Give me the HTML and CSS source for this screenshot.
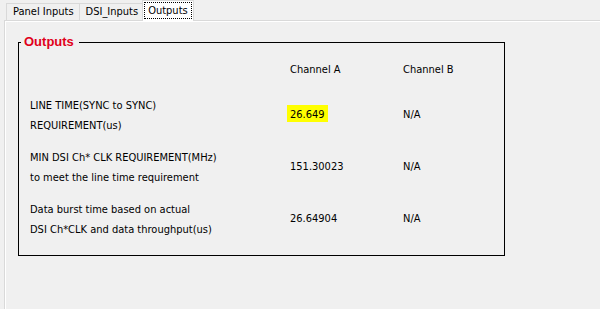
FILE: index.html
```html
<!DOCTYPE html>
<html lang="en">
<head>
  <meta charset="UTF-8" />
  <title>Outputs</title>
  <link rel="stylesheet" href="styles.css">
</head>
<body>

<div class="tabs">
  <div class="tab">Panel Inputs</div>
  <div class="tab">DSI_Inputs</div>
  <div class="tab active"><span class="focus">Outputs</span></div>
</div>

<div class="page">
  <fieldset class="group">
    <legend>Outputs</legend>
    <div class="grid">
      <div></div>
      <div class="head">Channel A</div>
      <div class="head">Channel B</div>

      <div class="label">LINE TIME(SYNC to SYNC)<br>REQUIREMENT(us)</div>
      <div class="value"><span class="hl">26.649</span></div>
      <div class="value">N/A</div>

      <div class="label">MIN DSI Ch* CLK REQUIREMENT(MHz)<br>to meet the line time requirement</div>
      <div class="value">151.30023</div>
      <div class="value">N/A</div>

      <div class="label">Data burst time based on actual<br>DSI Ch*CLK and data throughput(us)</div>
      <div class="value">26.64904</div>
      <div class="value">N/A</div>
    </div>
  </fieldset>
</div>

</body>
</html>
```

FILE: styles.css
```css
* { box-sizing: border-box; }
body {
  margin: 0;
  background: #f0f0f0;
  color: #000;
  font-family: 'DejaVu Sans Condensed', 'Liberation Sans', sans-serif;
  font-size: 11px;
}

.tabs {
  display: flex;
  align-items: flex-end;
  height: 20px;
  padding-left: 6px;
}

.tab {
  height: 17px;
  line-height: 16px;
  padding: 0 5px 0 6px;
  border: 1px solid #d9d9d9;
  border-bottom: none;
  background: #f0f0f0;
}
.tab + .tab { margin-left: -1px; }

.tab.active {
  position: relative;
  z-index: 1;
  height: 21px;
  margin-bottom: -1px;
  margin-left: -2px;
  padding: 1px 1px 0;
  background: #fff;
}

.focus {
  display: block;
  line-height: 15px;
  padding: 0 3px;
  border: 1px dotted #000;
}

.page {
  margin-left: 4px;
  height: 289px;
  border-top: 1px solid #d9d9d9;
  border-left: 1px solid #d9d9d9;
  box-shadow: inset 1px 1px 0 #fff;
  padding-top: 13px;
}

.group {
  width: 487px;
  margin: 0 0 0 13px;
  padding: 0;
  border: 1px solid #000;
}

.group legend {
  margin-left: 2px;
  padding: 0 5px 0 3px;
  line-height: 16px;
  font-family: 'Liberation Sans', sans-serif;
  font-size: 13px;
  font-weight: bold;
  color: #e0001a;
}

.grid {
  display: grid;
  grid-template-columns: 260px 113px 1fr;
  grid-template-rows: 35px 52px 52px 40px;
  align-items: start;
  padding: 10px 0 16px 11px;
  line-height: 20px;
}

.label { padding-top: 1px; }
.value { padding-top: 10px; }

.hl {
  display: inline-block;
  margin-left: -3px;
  padding: 4px 3px 1px;
  line-height: 12px;
  vertical-align: 2px;
  background: #ffff00;
}
```
